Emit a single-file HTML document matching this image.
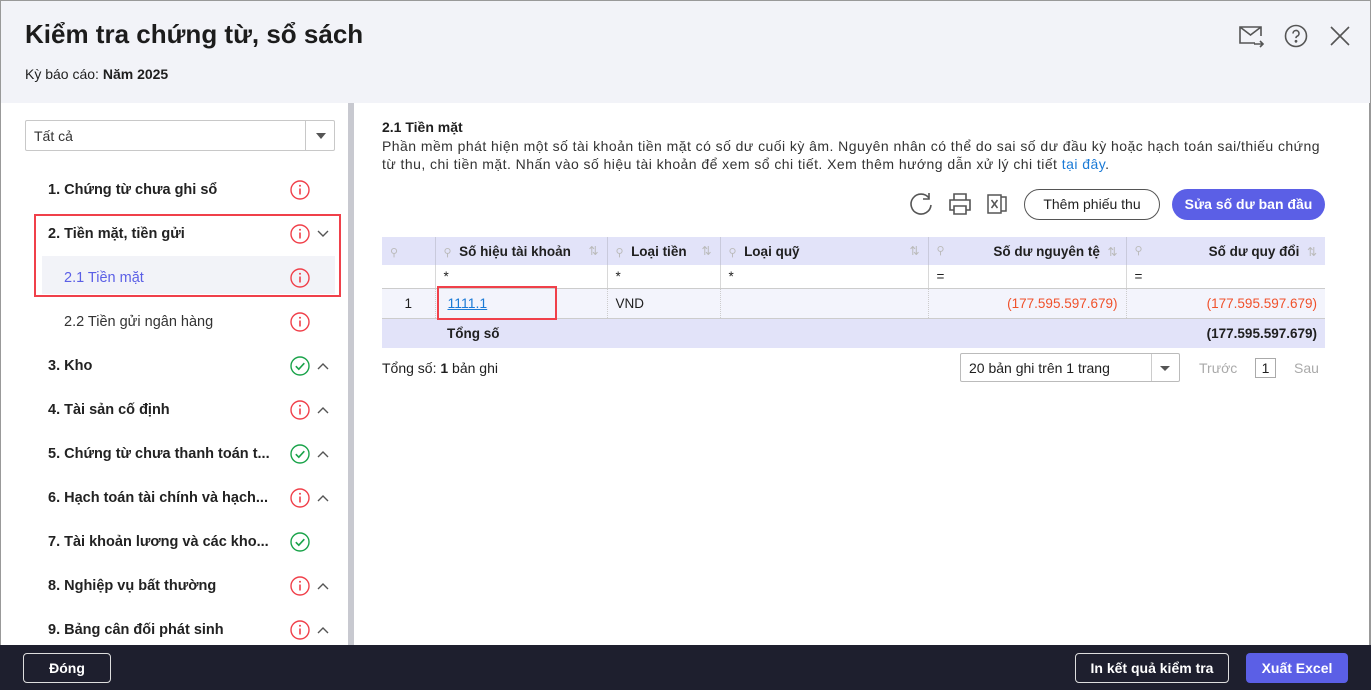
<!DOCTYPE html><html><head><meta charset="utf-8"><style>
*{box-sizing:border-box;margin:0;padding:0}
body{width:1371px;height:690px;overflow:hidden;font-family:"Liberation Sans",sans-serif;color:#1f1f1f;background:#fff;position:relative;font-size:14px}
.abs{position:absolute}
.hdr{left:0;top:0;width:1371px;height:103px;background:#f2f3f8;border:1px solid #999;border-bottom:none}
h1{position:absolute;left:25px;top:19px;font-size:26px;font-weight:bold;color:#1c1c1c}
.sub{left:25px;top:66px;font-size:14px}
.left{left:0;top:103px;width:349px;height:542px;background:#fff;border-left:1px solid #999}
.sb{left:348px;top:103px;width:6px;height:542px;background:#c8c9d0}
.sel{left:25px;top:120px;width:310px;height:31px;border:1px solid #c8c8c8;border-radius:2px;font-size:14px;padding:7px 8px;color:#333}
.sel .ar{position:absolute;right:0;top:0;width:29px;height:29px;border-left:1px solid #c8c8c8}
.sel .ar:after{content:"";position:absolute;left:10px;top:12px;border:5px solid transparent;border-top:6px solid #555}
.it{position:absolute;left:48px;font-size:14.5px;font-weight:bold;color:#222}
.si{position:absolute;left:64px;font-size:14.5px;color:#333}
.ic{position:absolute;left:290px;width:20px;height:20px}
.foot{left:0;top:645px;width:1371px;height:45px;background:#1e1f2e}
.btn{position:absolute;height:30px;border-radius:4px;font-size:14px;font-weight:bold;color:#fff;text-align:center;line-height:28px}
table{border-collapse:collapse;position:absolute;left:382px;top:237px;width:943px;font-size:13.5px}
td{padding:0 8px;height:28px}
.th td{background:#e2e3f9;font-weight:bold;border-right:1px solid #c9cadc}
.fl td{background:#fff;height:23px;border-right:1px solid #d8d8d8;border-bottom:1px solid #ccc}
.dr td{background:#f3f4fc;height:30px;border-right:1px dotted #ccc;border-bottom:1px solid #ccc}
.tr td{background:#e2e3f9;height:30px;font-weight:bold}
.red{color:#f0512b}
.pin{color:#bbb;font-weight:normal;font-size:11px}
.srt{color:#bbb;font-weight:normal;font-size:12px;float:right}
</style></head><body>
<div class="abs hdr"></div>
<h1>Kiểm tra chứng từ, sổ sách</h1>
<div class="abs sub">Kỳ báo cáo: <b>Năm 2025</b></div>
<svg class="abs" style="left:1238px;top:24px" width="28" height="24" viewBox="0 0 28 24" fill="none" stroke="#555" stroke-width="1.6"><path d="M17 19H2V3h21v9M2 3l10.5 8L23 3M16 20h9M22 17l3 3-3 3"/></svg>
<svg class="abs" style="left:1284px;top:24px" width="24" height="24" viewBox="0 0 24 24" fill="none" stroke="#555" stroke-width="1.6"><circle cx="12" cy="12" r="10.5"/><path d="M9 9.5a3 3 0 1 1 4 2.8c-.8.4-1 1-1 1.8"/><circle cx="12" cy="17.3" r=".6" fill="#555"/></svg>
<svg class="abs" style="left:1330px;top:26px" width="20" height="20" viewBox="0 0 20 20" stroke="#555" stroke-width="1.6"><path d="M1 1l18 18M19 1L1 19"/></svg>
<div class="abs left"></div><div class="abs sb"></div>
<div class="abs sel">Tất cả<div class="ar"></div></div>

<div class="it" style="top:182px">1. Chứng từ chưa ghi sổ</div>
<div class="it" style="top:226px">2. Tiền mặt, tiền gửi</div>
<div class="abs" style="left:42px;top:256px;width:293px;height:38px;background:#f2f3f8"></div>
<div class="si" style="top:270px;color:#5b5fe6">2.1 Tiền mặt</div>
<div class="si" style="top:314px">2.2 Tiền gửi ngân hàng</div>
<div class="it" style="top:358px">3. Kho</div>
<div class="it" style="top:402px">4. Tài sản cố định</div>
<div class="it" style="top:446px">5. Chứng từ chưa thanh toán t...</div>
<div class="it" style="top:490px">6. Hạch toán tài chính và hạch...</div>
<div class="it" style="top:534px">7. Tài khoản lương và các kho...</div>
<div class="it" style="top:578px">8. Nghiệp vụ bất thường</div>
<div class="it" style="top:622px">9. Bảng cân đối phát sinh</div>
<div class="abs" style="left:34px;top:214px;width:307px;height:83px;border:2.5px solid #f0404a"></div>

<svg width="0" height="0" style="position:absolute"><defs>
<g id="ri"><circle cx="10" cy="10" r="9" fill="none" stroke="#f0404a" stroke-width="1.4"/><path d="M10 8.5v6" stroke="#f0404a" stroke-width="1.6"/><circle cx="10" cy="5.8" r="1" fill="#f0404a"/></g>
<g id="gi"><circle cx="10" cy="10" r="9" fill="none" stroke="#1aa34a" stroke-width="1.4"/><path d="M5.8 10.2l3 3 5.5-6" fill="none" stroke="#1aa34a" stroke-width="1.6"/></g>
</defs></svg>
<svg class="ic" style="top:180px"><use href="#ri"/></svg>
<svg class="ic" style="top:224px"><use href="#ri"/></svg>
<svg class="ic" style="top:268px"><use href="#ri"/></svg>
<svg class="ic" style="top:312px"><use href="#ri"/></svg>
<svg class="ic" style="top:356px"><use href="#gi"/></svg>
<svg class="ic" style="top:400px"><use href="#ri"/></svg>
<svg class="ic" style="top:444px"><use href="#gi"/></svg>
<svg class="ic" style="top:488px"><use href="#ri"/></svg>
<svg class="ic" style="top:532px"><use href="#gi"/></svg>
<svg class="ic" style="top:576px"><use href="#ri"/></svg>
<svg class="ic" style="top:620px"><use href="#ri"/></svg>
<svg class="abs" style="left:317px;top:230px" width="12" height="8" fill="none" stroke="#555" stroke-width="1.4"><path d="M1 1l5 5 5-5"/></svg>
<svg class="abs" style="left:317px;top:362px" width="12" height="8" fill="none" stroke="#555" stroke-width="1.4"><path d="M1 7l5-5 5 5"/></svg>
<svg class="abs" style="left:317px;top:406px" width="12" height="8" fill="none" stroke="#555" stroke-width="1.4"><path d="M1 7l5-5 5 5"/></svg>
<svg class="abs" style="left:317px;top:450px" width="12" height="8" fill="none" stroke="#555" stroke-width="1.4"><path d="M1 7l5-5 5 5"/></svg>
<svg class="abs" style="left:317px;top:494px" width="12" height="8" fill="none" stroke="#555" stroke-width="1.4"><path d="M1 7l5-5 5 5"/></svg>
<svg class="abs" style="left:317px;top:582px" width="12" height="8" fill="none" stroke="#555" stroke-width="1.4"><path d="M1 7l5-5 5 5"/></svg>
<svg class="abs" style="left:317px;top:626px" width="12" height="8" fill="none" stroke="#555" stroke-width="1.4"><path d="M1 7l5-5 5 5"/></svg>

<div class="abs" style="left:1369px;top:103px;width:2px;height:542px;background:#999"></div>
<div class="abs" style="left:382px;top:119px;font-weight:bold;font-size:14px">2.1 Tiền mặt</div>
<div class="abs" style="left:382px;top:137px;width:960px;font-size:14px;line-height:18px;color:#333;letter-spacing:0.45px;white-space:nowrap">Phần mềm phát hiện một số tài khoản tiền mặt có số dư cuối kỳ âm. Nguyên nhân có thể do sai số dư đầu kỳ hoặc hạch toán sai/thiếu chứng<br>từ thu, chi tiền mặt. Nhấn vào số hiệu tài khoản để xem sổ chi tiết. Xem thêm hướng dẫn xử lý chi tiết <span style="color:#1a7ad6">tại đây</span>.</div>

<svg class="abs" style="left:909px;top:192px" width="24" height="24" fill="none" stroke="#555" stroke-width="1.6"><path d="M20 6A10 10 0 1 0 22 13"/><path d="M20 1v6h-6"/></svg>
<svg class="abs" style="left:948px;top:192px" width="24" height="24" fill="none" stroke="#555" stroke-width="1.6"><path d="M6 8V2h12v6M6 18H2V8h20v10h-4M6 14h12v8H6z"/></svg>
<svg class="abs" style="left:987px;top:192px" width="22" height="24" fill="none" stroke="#555" stroke-width="1.5"><path d="M1 3h13v18H1zM14 5h5v14h-5M4.5 8l6 8M10.5 8l-6 8"/></svg>
<div class="btn" style="left:1024px;top:189px;width:136px;height:31px;border:1px solid #555;border-radius:16px;color:#222;font-weight:normal;line-height:29px">Thêm phiếu thu</div>
<div class="btn" style="left:1172px;top:189px;width:153px;height:31px;background:#5b5fe6;border-radius:16px;line-height:31px">Sửa số dư ban đầu</div>

<table>
<tr class="th"><td style="width:53px"><span class="pin">⚲</span></td><td style="width:172px"><span class="pin">⚲</span> &nbsp;Số hiệu tài khoản<span class="srt">⇅</span></td><td style="width:113px"><span class="pin">⚲</span> &nbsp;Loại tiền<span class="srt">⇅</span></td><td style="width:208px"><span class="pin">⚲</span> &nbsp;Loại quỹ<span class="srt">⇅</span></td><td style="width:198px;text-align:right"><span class="pin" style="float:left">⚲</span>Số dư nguyên tệ &nbsp;<span class="srt" style="float:none">⇅</span></td><td style="text-align:right;border-right:none"><span class="pin" style="float:left">⚲</span>Số dư quy đổi &nbsp;<span class="srt" style="float:none">⇅</span></td></tr>
<tr class="fl"><td></td><td>*</td><td>*</td><td>*</td><td>=</td><td style="border-right:none">=</td></tr>
<tr class="dr"><td style="text-align:center">1</td><td style="padding-left:12px"><span style="color:#1a7ad6;text-decoration:underline;font-size:14px">1111.1</span></td><td>VND</td><td></td><td class="red" style="text-align:right">(177.595.597.679)</td><td class="red" style="text-align:right;border-right:none">(177.595.597.679)</td></tr>
<tr class="tr"><td></td><td style="padding-left:12px">Tổng số</td><td></td><td></td><td></td><td style="text-align:right">(177.595.597.679)</td></tr>
</table>
<div class="abs" style="left:437px;top:286px;width:120px;height:34px;border:2.5px solid #f0404a"></div>
<div class="abs" style="left:382px;top:360px">Tổng số: <b>1</b> bản ghi</div>
<div class="abs" style="left:960px;top:353px;width:220px;height:29px;border:1px solid #bbb;border-radius:2px;padding:6px 8px">20 bản ghi trên 1 trang<div style="position:absolute;right:0;top:0;width:28px;height:27px;border-left:1px solid #ccc"></div><div style="position:absolute;right:9px;top:12px;border:5px solid transparent;border-top:5px solid #555"></div></div>
<div class="abs" style="left:1199px;top:360px;color:#aaa">Trước</div>
<div class="abs" style="left:1255px;top:358px;width:21px;height:20px;border:1px solid #aaa;text-align:center;line-height:18px">1</div>
<div class="abs" style="left:1294px;top:360px;color:#aaa">Sau</div>

<div class="abs foot"></div>
<div class="btn" style="left:23px;top:653px;width:88px;border:1px solid #ddd">Đóng</div>
<div class="btn" style="left:1075px;top:653px;width:154px;border:1px solid #ddd">In kết quả kiểm tra</div>
<div class="btn" style="left:1246px;top:653px;width:102px;background:#5b5fe6;line-height:30px">Xuất Excel</div>
</body></html>
